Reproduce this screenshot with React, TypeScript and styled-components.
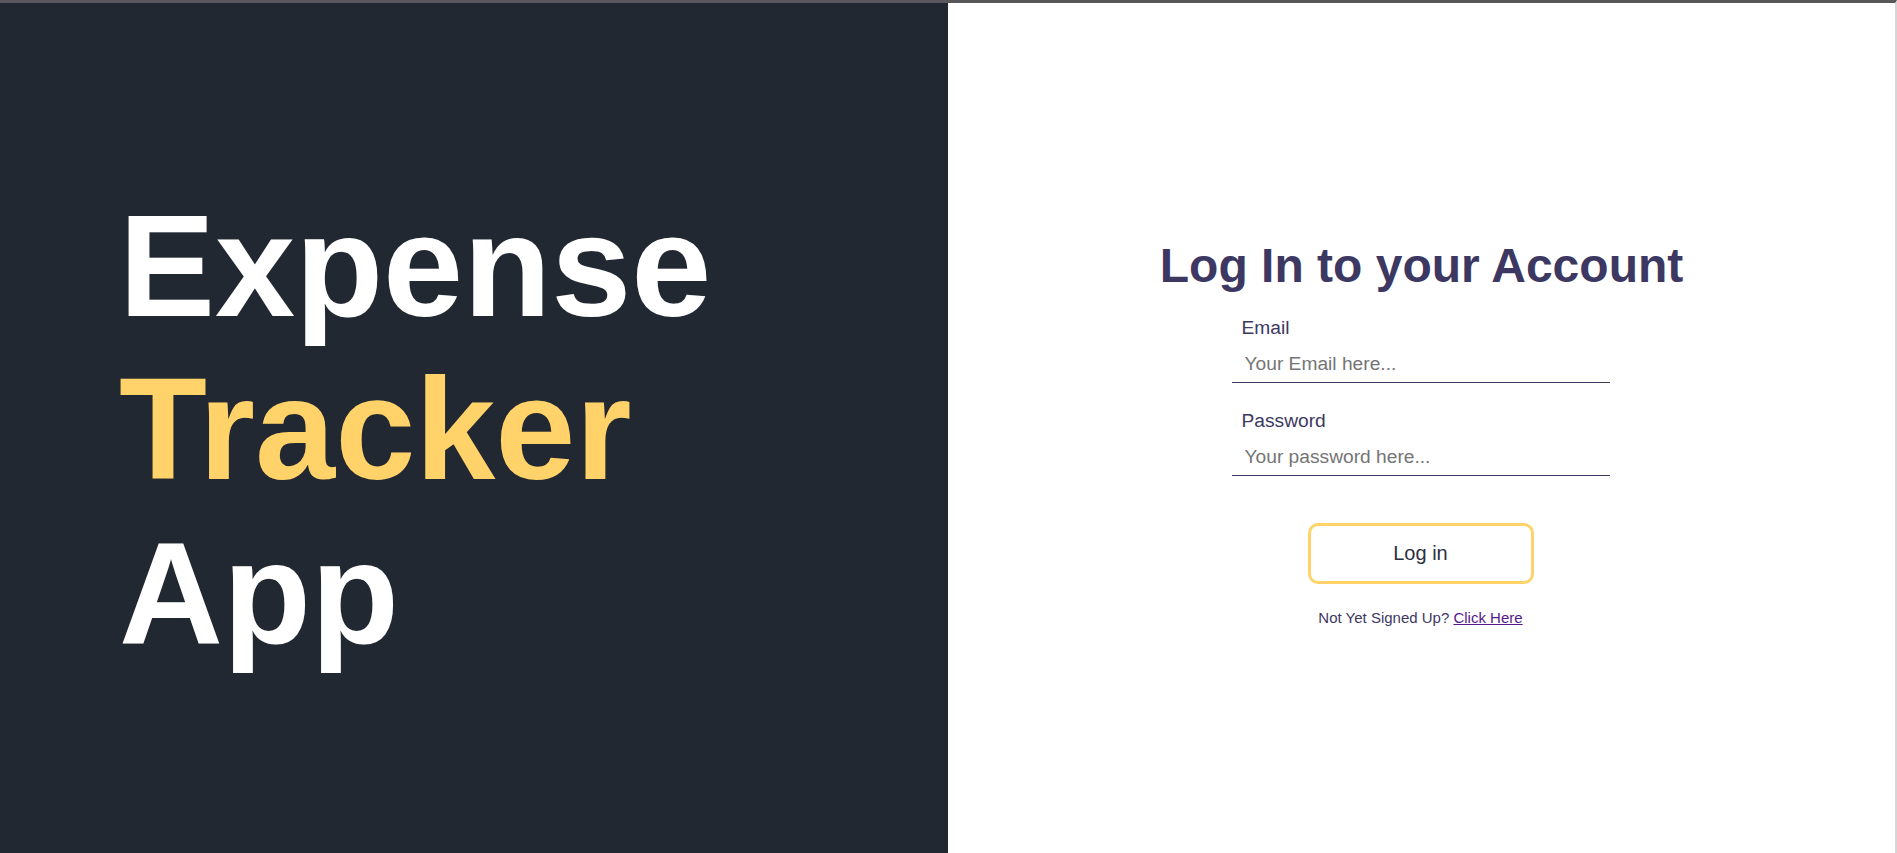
import React from "react";
import styled, { createGlobalStyle } from "styled-components";

const GlobalStyle = createGlobalStyle`
  * { box-sizing: border-box; }
  html, body { margin: 0; padding: 0; height: 100%; }
  body {
    font-family: "Liberation Sans", Arial, Helvetica, sans-serif;
    background: #ffffff;
  }
`;

const Page = styled.div`
  display: grid;
  grid-template-columns: 948px 1fr;
  height: 853px;
  border-top: 3px solid #58585b;
  border-right: 2px solid #d6d6d6;
`;

const HeroPanel = styled.section`
  background: #222831;
  display: flex;
  align-items: center;
  padding: 4px 0 0 119px;
`;

const HeroTitle = styled.h1`
  margin: 0;
  font-size: 144px;
  line-height: 1.135;
  font-weight: 700;
  color: #ffffff;
`;

const HeroLine = styled.span<{ $accent?: boolean }>`
  display: block;
  color: ${(p) => (p.$accent ? "#ffd369" : "#ffffff")};
`;

const FormPanel = styled.section`
  display: flex;
  flex-direction: column;
  align-items: center;
  justify-content: center;
  padding-top: 7px;
`;

const FormTitle = styled.h2`
  margin: 0 0 24px;
  font-size: 48px;
  line-height: normal;
  font-weight: 700;
  color: #3d3862;
  text-align: center;
`;

const Form = styled.form`
  width: 378px;
  margin-right: 2px;
  display: flex;
  flex-direction: column;
  align-items: center;
`;

const Field = styled.div<{ $gap?: number }>`
  width: 100%;
  display: flex;
  flex-direction: column;
  margin-top: ${(p) => p.$gap ?? 0}px;
`;

const Label = styled.label`
  font-size: 19.2px;
  line-height: normal;
  color: #3d3862;
  padding-left: 10px;
  margin-bottom: 9px;
`;

const Input = styled.input`
  width: 100%;
  font-family: inherit;
  font-size: 19.2px;
  line-height: 22px;
  padding: 5px 13px 7px;
  border: none;
  border-bottom: 1px solid #3d3862;
  outline: none;
  background: transparent;
  color: #222831;

  &::placeholder {
    color: #757575;
  }
`;

const SubmitButton = styled.button`
  margin-top: 47px;
  width: 226px;
  height: 61px;
  background: #ffffff;
  border: 3px solid #ffd369;
  border-radius: 10px;
  font-family: inherit;
  font-size: 20px;
  color: #2b3040;
  cursor: pointer;
`;

const SignupNote = styled.p`
  margin: 25px 0 0;
  font-size: 15px;
  line-height: normal;
  color: #3d3862;
`;

const SignupLink = styled.a`
  color: #551a8b;
  text-decoration: underline;
`;

export default function App() {
  return (
    <>
      <GlobalStyle />
      <Page>
        <HeroPanel>
          <HeroTitle>
            <HeroLine>Expense</HeroLine>
            <HeroLine $accent>Tracker</HeroLine>
            <HeroLine>App</HeroLine>
          </HeroTitle>
        </HeroPanel>
        <FormPanel>
          <FormTitle>Log In to your Account</FormTitle>
          <Form onSubmit={(e) => e.preventDefault()}>
            <Field>
              <Label htmlFor="email">Email</Label>
              <Input id="email" type="email" placeholder="Your Email here..." />
            </Field>
            <Field $gap={27}>
              <Label htmlFor="password">Password</Label>
              <Input id="password" type="password" placeholder="Your password here..." />
            </Field>
            <SubmitButton type="submit">Log in</SubmitButton>
            <SignupNote>
              Not Yet Signed Up? <SignupLink href="#signup">Click Here</SignupLink>
            </SignupNote>
          </Form>
        </FormPanel>
      </Page>
    </>
  );
}
